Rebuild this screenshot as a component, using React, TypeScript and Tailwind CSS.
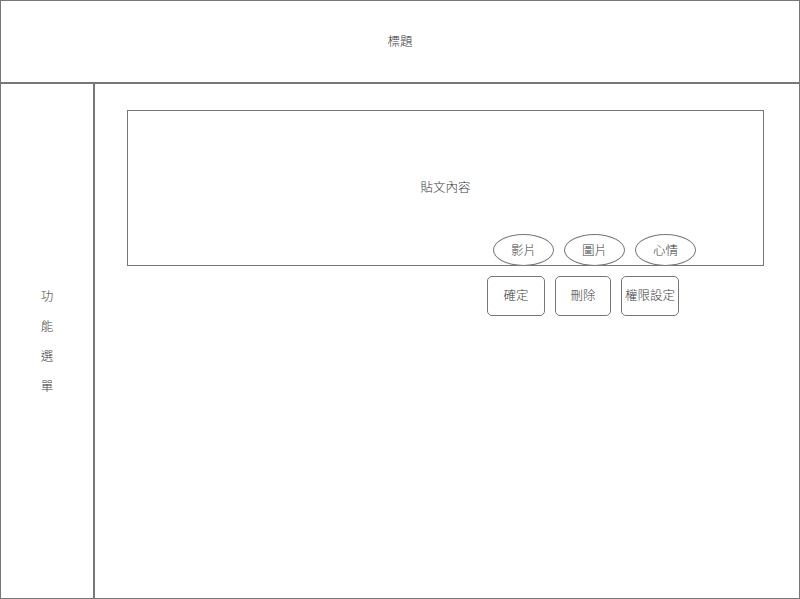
const font = { fontFamily: '"Noto Sans CJK TC", "Noto Sans CJK SC", sans-serif' }

const moods = ['影片', '圖片', '心情']

const actions = [
	{ label: '確定', width: 'w-[58px]' },
	{ label: '刪除', width: 'w-[56px]' },
	{ label: '權限設定', width: 'w-[58px]' }
]

export default function App() {
	return (
		<div
			style={font}
			className="flex h-[599px] w-[800px] flex-col border border-[#777] bg-white text-[12.5px] font-light text-[#3a3a3a]"
		>
			{/* header */}
			<div className="flex h-[83px] shrink-0 items-center justify-center border-b-2 border-[#777] pb-[1px]">
				標題
			</div>

			<div className="flex min-h-0 flex-1">
				{/* side menu */}
				<div className="flex w-[94px] shrink-0 flex-col items-center justify-center border-r-2 border-[#777]">
					{['功', '能', '選', '單'].map((c) => (
						<span key={c} className="leading-[30px]">
							{c}
						</span>
					))}
				</div>

				{/* main */}
				<div className="flex-1 pl-[32px] pt-[26px]">
					<div className="relative flex h-[156px] w-[637px] items-center justify-center border border-[#777] pb-[2px]">
						貼文內容
						<div className="absolute bottom-[-1px] right-[67px] flex gap-[10px]">
							{moods.map((m) => (
								<div
									key={m}
									className="flex h-[32px] w-[61px] items-center justify-center rounded-[50%] border border-[#777] bg-white"
								>
									{m}
								</div>
							))}
						</div>
					</div>

					<div className="ml-[360px] mt-[10px] flex gap-[10px]">
						{actions.map((a) => (
							<div
								key={a.label}
								className={`flex h-[40px] items-center justify-center rounded-[5px] border border-[#777] pb-[2px] whitespace-nowrap ${a.width}`}
							>
								{a.label}
							</div>
						))}
					</div>
				</div>
			</div>
		</div>
	)
}
